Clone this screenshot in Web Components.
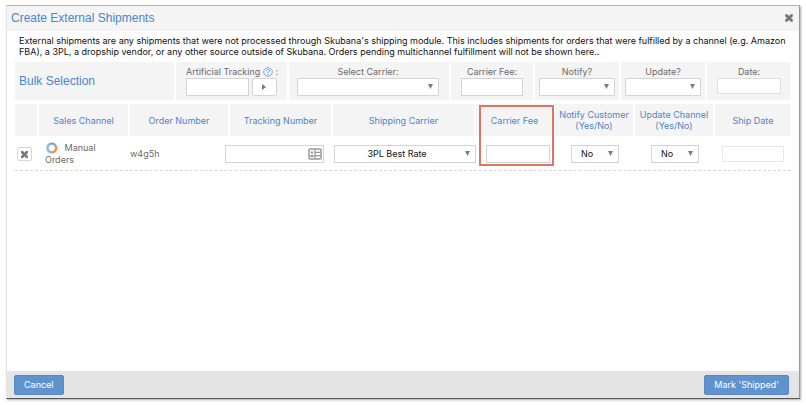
<!DOCTYPE html>
<html lang="en">
<head>
<meta charset="utf-8">
<title>Create External Shipments</title>
<style>
  body { margin: 0; background: #fff; font-family: Inter, "Liberation Sans", Arial, sans-serif; font-size: 9px; line-height: 12px; color: #6b6b6b; }
</style>
</head>
<body>
<shipment-dialog>
  <span slot="title">Create External Shipments</span>
  <p slot="intro" style="margin:0">External shipments are any shipments that were not processed through Skubana's shipping module. This includes shipments for orders that were fulfilled by a channel (e.g. Amazon FBA), a 3PL, a dropship vendor, or any other source outside of Skubana. Orders pending multichannel fulfillment will not be shown here..</p>
  <bulk-selection></bulk-selection>
  <shipment-table></shipment-table>
  <action-button slot="cancel">Cancel</action-button>
  <action-button slot="submit">Mark 'Shipped'</action-button>
</shipment-dialog>

<script>
  const CONTROL_STYLES = `
    * { box-sizing: border-box; }
    input, select, button { font: inherit; color: #111; margin: 0; outline: none; }
    input { width: 100%; height: 18px; padding: 0 4px; background: #fff; border: 1px solid #d4d4d4; border-radius: 0; display: block; }
    select { width: 100%; height: 18px; padding: 0 18px 0 2px; background: #fff; border: 1px solid #d4d4d4; border-radius: 0; display: block; appearance: none; text-align-last: center; }
    .select { position: relative; }
    .select svg { position: absolute; right: 6px; top: 6px; width: 5px; height: 5px; pointer-events: none; }
  `;
  const HEADING_STYLES = `margin: 0; font-family: "Liberation Sans", Arial, sans-serif; font-size: 12px; line-height: 14px; font-weight: normal; color: #4a86cc;`;
  const ARROW = `<svg viewBox="0 0 6 6" aria-hidden="true"><path d="M0 0h6L3 6z" fill="#7d7d7d"/></svg>`;
  const CROSS = `<svg viewBox="0 0 10 10" aria-hidden="true"><path d="M1.2 1.2h2.2L5 3l1.600-1.800h2.200v2.200L7 5l1.800 1.600v2.200H6.600L5 7 3.400 8.800H1.200V6.600L3 5 1.200 3.400z" fill="#777"/></svg>`;

  const define = (name, html) => {
    const template = document.createElement("template");
    template.innerHTML = html;
    customElements.define(name, class extends HTMLElement {
      constructor() {
        super();
        this.attachShadow({ mode: "open" }).append(template.content.cloneNode(true));
      }
    });
  };

  define("shipment-dialog", `
    <style>
      * { box-sizing: border-box; }
      :host { display: flex; box-sizing: border-box; min-height: 100vh; padding: 5px 6px 6px 6px; }
      section { flex: 1; min-width: 0; display: flex; flex-direction: column; background: #fff; border: 1px solid; border-color: #b4b6bc #999 #555 #e4e4e4; box-shadow: 1px 1px 2px #aaa; }
      header { display: flex; align-items: center; justify-content: space-between; height: 25px; padding: 0 5px 2px 4px; background: #f4f4f4; }
      h1 { ${HEADING_STYLES} }
      header button { width: 10px; height: 10px; padding: 0; border: 0; background: none; display: block; }
      header svg { width: 10px; height: 10px; display: block; }
      main { flex: 1; padding: 4px 8px; }
      .intro { padding: 0 4px; color: #111; line-height: 11px; }
      footer { display: flex; align-items: center; justify-content: space-between; height: 27px; padding: 0 10px 0 7px; background: #e4e4e4; }
    </style>
    <section role="dialog" aria-labelledby="title">
      <header><h1 id="title"><slot name="title"></slot></h1><button type="button" aria-label="Close">${CROSS}</button></header>
      <main><div class="intro"><slot name="intro"></slot></div><slot></slot></main>
      <footer><slot name="cancel"></slot><slot name="submit"></slot></footer>
    </section>`);

  define("action-button", `
    <style>
      :host { display: block; }
      button { display: block; height: 20px; padding: 0 9px; font: inherit; color: #fff; background: #6093cd; border: 1px solid #5689c6; border-radius: 2px; }
    </style>
    <button type="button"><slot></slot></button>`);

  define("bulk-selection", `
    <style>${CONTROL_STYLES}
      :host { display: grid; grid-template-columns: 159fr 111fr 160fr 82fr 84fr 84fr 84fr; gap: 2px; margin-top: 5px; }
      .cell { min-width: 0; height: 38px; padding: 4px 4px 0; background: #f4f4f4; text-align: center; }
      .cell > label { display: block; white-space: nowrap; }
      .wide { padding: 4px 10px 0 8px; }
      .title { display: flex; align-items: center; padding: 0 4px; }
      h2 { ${HEADING_STYLES} }
      .tracking { display: grid; grid-template-columns: 62fr 25fr; gap: 3px; }
      .tracking button { height: 18px; padding: 0; background: #fff; border: 1px solid #d4d4d4; border-radius: 2px; display: flex; align-items: center; justify-content: center; }
      .tracking button svg { width: 4px; height: 6px; }
      .help { width: 10px; height: 10px; vertical-align: -2px; }
      .date input { height: 16px; border-color: #e0e0e0; }
      .pad { padding: 4px 10px 0; }
    </style>
    <div class="cell title"><h2>Bulk Selection</h2></div>
    <div class="cell pad">
      <label for="tracking">Artificial Tracking <svg class="help" viewBox="0 0 10 10" aria-hidden="true"><circle cx="5" cy="5" r="4.300" fill="#f1f6fc" stroke="#7fa9da"/><path d="M3.500 4c0-2 3-2 3-.2C6.500 5 5 4.800 5 6.200M5 7v1" fill="none" stroke="#5f93d0"/></svg> :</label>
      <div class="tracking"><input id="tracking"><button type="button" aria-label="Apply tracking"><svg viewBox="0 0 4 6"><path d="M0 0l4 3-4 3z" fill="#777"/></svg></button></div>
    </div>
    <div class="cell wide"><label for="carrier">Select Carrier:</label><div class="select"><select id="carrier"><option></option><option>3PL Best Rate</option></select>${ARROW}</div></div>
    <div class="cell pad"><label for="fee">Carrier Fee:</label><input id="fee"></div>
    <div class="cell"><label for="notify">Notify?</label><div class="select"><select id="notify"><option></option><option>Yes</option><option>No</option></select>${ARROW}</div></div>
    <div class="cell"><label for="update">Update?</label><div class="select"><select id="update"><option></option><option>Yes</option><option>No</option></select>${ARROW}</div></div>
    <div class="cell pad date"><label for="date">Date:</label><input id="date"></div>`);

  define("shipment-table", `
    <style>${CONTROL_STYLES}
      :host { display: block; margin-top: 4px; }
      table { width: 100%; table-layout: fixed; border-spacing: 0; border-bottom: 1px dashed #d4d4d4; }
      th { position: relative; height: 32px; padding: 0; font-weight: normal; line-height: 11px; color: #4a86cc; background: #f4f4f4; border-right: 2px solid #fff; }
      th:last-child { border-right: 0; }
      td { height: 34px; padding: 2px 0 0; }
      .channel { padding-left: 6px; }
      .channel svg { width: 12px; height: 12px; margin: 0 4px 0 1px; vertical-align: -3px; }
      .remove { display: flex; align-items: center; justify-content: center; width: 15px; height: 14px; margin-left: 2px; padding: 0; background: #fff; border: 1px solid #d8d8d8; border-radius: 2px; }
      .remove svg { width: 9px; height: 9px; }
      .tracking { position: relative; margin: 0 9px 0 -5px; }
      .tracking svg { position: absolute; right: 2px; top: 3px; width: 14px; height: 12px; }
      .carrier { margin: 0 0 0 1px; }
      .fee { margin: 0 5px 0 10px; }
      .choice { margin: 0 16px; }
      .date { margin: 0 7px; }
      .date input { height: 16px; border-color: #e8e8e8; }
      .highlight { position: absolute; left: 3px; right: -1px; top: 1px; height: 61px; border: 2px solid #e07462; pointer-events: none; z-index: 1; }
    </style>
    <table>
      <colgroup><col style="width:24px"><col style="width:91px"><col style="width:100px"><col style="width:103px"><col style="width:143px"><col style="width:79px"><col style="width:80px"><col style="width:80px"><col style="width:76px"></colgroup>
      <thead><tr><th></th><th>Sales Channel</th><th>Order Number</th><th>Tracking Number</th><th>Shipping Carrier</th><th>Carrier Fee<div class="highlight"></div></th><th>Notify Customer<br>(Yes/No)</th><th>Update Channel<br>(Yes/No)</th><th>Ship Date</th></tr></thead>
      <tbody><tr>
        <td><button class="remove" type="button" aria-label="Remove">${CROSS}</button></td>
        <td class="channel"><svg viewBox="0 0 12 12" aria-hidden="true"><path d="M5 10.200A4.300 4.300 0 0 1 5.500 1.700" fill="none" stroke="#8db9dd" stroke-width="2.400"/><path d="M4.500 1.900a4.300 4.300 0 0 1 5.200 2" fill="none" stroke="#6ea4d4" stroke-width="2"/><path d="M9.600 3.800A4.300 4.300 0 0 1 5 10.200" fill="none" stroke="#e2955c" stroke-width="2.400"/></svg> Manual<br>Orders</td>
        <td>w4g5h</td>
        <td><div class="tracking"><input aria-label="Tracking Number"><svg viewBox="0 0 14 12" aria-hidden="true"><rect x="1" y="1" width="12" height="10" rx="1" fill="#fff" stroke="#999" stroke-width="1.500"/><path d="M7 1.500v9M7 4.300h5.500M7 7.600h5.500" stroke="#999" stroke-width="1.300"/><circle cx="4" cy="4.500" r="1.200" fill="#999"/><path d="M2 9c0-3 4-3 4 0z" fill="#999"/></svg></div></td>
        <td><div class="select carrier"><select aria-label="Shipping Carrier"><option>3PL Best Rate</option></select>${ARROW}</div></td>
        <td><div class="fee"><input aria-label="Carrier Fee"></div></td>
        <td><div class="select choice"><select aria-label="Notify Customer"><option>No</option><option>Yes</option></select>${ARROW}</div></td>
        <td><div class="select choice"><select aria-label="Update Channel"><option>No</option><option>Yes</option></select>${ARROW}</div></td>
        <td><div class="date"><input aria-label="Ship Date"></div></td>
      </tr></tbody>
    </table>`);
</script>
</body>
</html>
